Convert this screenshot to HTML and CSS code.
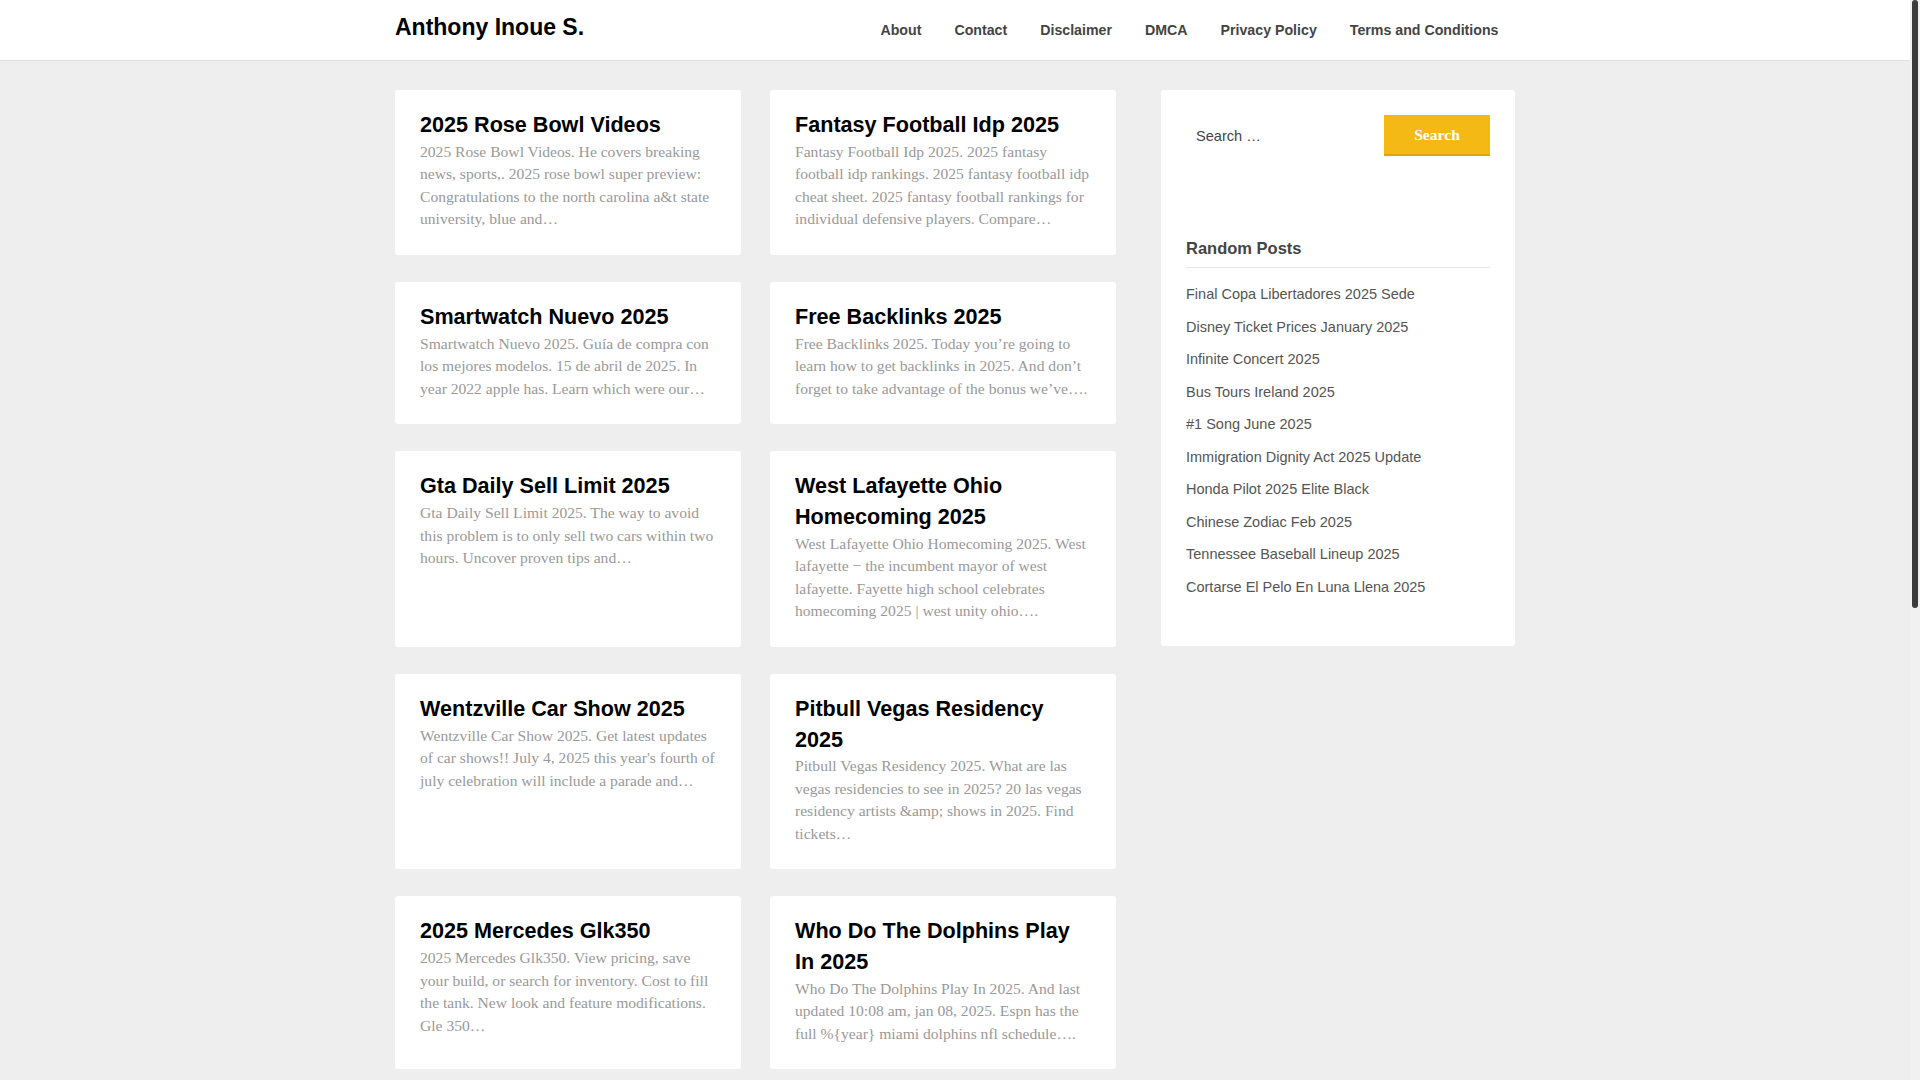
FILE: index.html
```html
<!DOCTYPE html>
<html lang="en">
<head>
<meta charset="utf-8">
<title>Anthony Inoue S.</title>
<link rel="stylesheet" href="styles.css">
</head>
<body>
<header class="site-header">
  <div class="container header-inner">
    <a class="site-title" href="#">Anthony Inoue S.</a>
    <nav class="main-nav">
      <a href="#">About</a>
      <a href="#">Contact</a>
      <a href="#">Disclaimer</a>
      <a href="#">DMCA</a>
      <a href="#">Privacy Policy</a>
      <a href="#">Terms and Conditions</a>
    </nav>
  </div>
</header>

<div class="container page">
  <main class="posts">
    <article class="card">
      <h2 class="card-title">2025 Rose Bowl Videos</h2>
      <p class="card-excerpt">2025 Rose Bowl Videos. He covers breaking news, sports,. 2025 rose bowl super preview: Congratulations to the north carolina a&amp;t state university, blue and…</p>
    </article>
    <article class="card">
      <h2 class="card-title">Fantasy Football Idp 2025</h2>
      <p class="card-excerpt">Fantasy Football Idp 2025. 2025 fantasy football idp rankings. 2025 fantasy football idp cheat sheet. 2025 fantasy football rankings for individual defensive players. Compare…</p>
    </article>
    <article class="card">
      <h2 class="card-title">Smartwatch Nuevo 2025</h2>
      <p class="card-excerpt">Smartwatch Nuevo 2025. Guía de compra con los mejores modelos. 15 de abril de 2025. In year 2022 apple has. Learn which were our…</p>
    </article>
    <article class="card">
      <h2 class="card-title">Free Backlinks 2025</h2>
      <p class="card-excerpt">Free Backlinks 2025. Today you’re going to learn how to get backlinks in 2025. And don’t forget to take advantage of the bonus we’ve….</p>
    </article>
    <article class="card">
      <h2 class="card-title">Gta Daily Sell Limit 2025</h2>
      <p class="card-excerpt">Gta Daily Sell Limit 2025. The way to avoid this problem is to only sell two cars within two hours. Uncover proven tips and…</p>
    </article>
    <article class="card">
      <h2 class="card-title">West Lafayette Ohio Homecoming 2025</h2>
      <p class="card-excerpt">West Lafayette Ohio Homecoming 2025. West lafayette − the incumbent mayor of west lafayette. Fayette high school celebrates homecoming 2025 | west unity ohio….</p>
    </article>
    <article class="card">
      <h2 class="card-title">Wentzville Car Show 2025</h2>
      <p class="card-excerpt">Wentzville Car Show 2025. Get latest updates of car shows!! July 4, 2025 this year's fourth of july celebration will include a parade and…</p>
    </article>
    <article class="card">
      <h2 class="card-title">Pitbull Vegas Residency 2025</h2>
      <p class="card-excerpt">Pitbull Vegas Residency 2025. What are las vegas residencies to see in 2025? 20 las vegas residency artists &amp;amp; shows in 2025. Find tickets…</p>
    </article>
    <article class="card">
      <h2 class="card-title">2025 Mercedes Glk350</h2>
      <p class="card-excerpt">2025 Mercedes Glk350. View pricing, save your build, or search for inventory. Cost to fill the tank. New look and feature modifications. Gle 350…</p>
    </article>
    <article class="card">
      <h2 class="card-title">Who Do The Dolphins Play In 2025</h2>
      <p class="card-excerpt">Who Do The Dolphins Play In 2025. And last updated 10:08 am, jan 08, 2025. Espn has the full %{year} miami dolphins nfl schedule….</p>
    </article>
    <article class="card">
      <h2 class="card-title">Nba Draft Lottery 2025 Date</h2>
      <p class="card-excerpt">Nba Draft Lottery 2025 Date. The lottery will determine the order of the first fourteen picks. Here is everything you need to know about…</p>
    </article>
    <article class="card">
      <h2 class="card-title">Calendar Of Events 2025</h2>
      <p class="card-excerpt">Calendar Of Events 2025. Find festivals, concerts and community events happening this year. Plan ahead and mark your…</p>
    </article>
    <article class="card">
      <h2 class="card-title">Best Family Cars 2025</h2>
      <p class="card-excerpt">Best Family Cars 2025. Our experts rank the best family cars for space, safety and value. Compare prices and…</p>
    </article>
    <article class="card">
      <h2 class="card-title">Spring Break Dates 2025</h2>
      <p class="card-excerpt">Spring Break Dates 2025. Check when spring break starts for colleges and school districts across the country. See the full…</p>
    </article>
  </main>

  <aside class="sidebar">
    <section class="widget widget-search">
      <form class="search-form" action="#">
        <input class="search-field" type="search" placeholder="Search …">
        <button class="search-submit" type="button">Search</button>
      </form>
    </section>
    <section class="widget widget-random">
      <h3 class="widget-title">Random Posts</h3>
      <ul class="widget-list">
        <li><a href="#">Final Copa Libertadores 2025 Sede</a></li>
        <li><a href="#">Disney Ticket Prices January 2025</a></li>
        <li><a href="#">Infinite Concert 2025</a></li>
        <li><a href="#">Bus Tours Ireland 2025</a></li>
        <li><a href="#">#1 Song June 2025</a></li>
        <li><a href="#">Immigration Dignity Act 2025 Update</a></li>
        <li><a href="#">Honda Pilot 2025 Elite Black</a></li>
        <li><a href="#">Chinese Zodiac Feb 2025</a></li>
        <li><a href="#">Tennessee Baseball Lineup 2025</a></li>
        <li><a href="#">Cortarse El Pelo En Luna Llena 2025</a></li>
      </ul>
    </section>
  </aside>
</div>

<footer class="site-footer">
  <div class="container footer-inner">Copyright © 2025 Anthony Inoue S.</div>
</footer>

<div class="scrollbar" aria-hidden="true"><div class="scrollbar-thumb"></div></div>
</body>
</html>
```

FILE: styles.css
```css
html {
  background: #eeeeee;
}

body {
  margin: 0;
  padding-right: 10px;
  background: #eeeeee;
  font-family: "Liberation Sans", Arial, sans-serif;
  color: #333333;
}

a {
  text-decoration: none;
  color: inherit;
}

.container {
  width: 1120px;
  margin: 0 auto;
}

/* Fake window scrollbar (overlay on the right edge) */
.scrollbar {
  position: fixed;
  top: 0;
  right: 0;
  width: 10px;
  height: 100vh;
  background: #f1f1f1;
}

.scrollbar-thumb {
  width: 6px;
  height: 608px;
  margin: 0 auto;
  border-radius: 3px;
  background: #3c3c3c;
}

/* Header */
.site-header {
  background: #ffffff;
  border-bottom: 1px solid #dddddd;
}

.header-inner {
  height: 60px;
  display: flex;
  align-items: center;
  justify-content: space-between;
}

.site-title {
  font-size: 23px;
  font-weight: 700;
  color: #000000;
  margin-bottom: 5px;
}

.main-nav {
  display: flex;
  align-items: center;
}

.main-nav a {
  font-size: 14.2px;
  font-weight: 700;
  color: #444444;
  padding: 0 16.5px;
  line-height: 60px;
}

/* Page layout */
.page {
  display: flex;
  align-items: flex-start;
  gap: 45px;
  padding-top: 29px;
  padding-bottom: 30px;
}

.posts {
  flex: 0 0 721px;
  min-width: 0;
  display: grid;
  grid-template-columns: 346px 346px;
  column-gap: 29px;
  row-gap: 27px;
}

.card {
  background: #ffffff;
  border-radius: 3px;
  padding: 20px 25px 24px;
}

.card-title {
  margin: 0;
  font-size: 21.6px;
  line-height: 30.6px;
  font-weight: 700;
  color: #000000;
}

.card-excerpt {
  margin: 0;
  font-family: "Liberation Serif", "Times New Roman", serif;
  font-size: 15.6px;
  line-height: 22.6px;
  color: #999999;
}

/* Sidebar */
.sidebar {
  flex: 0 0 354px;
  width: 354px;
  min-width: 0;
  background: #ffffff;
  border-radius: 3px;
  padding: 25px;
  box-sizing: border-box;
}

.widget-search {
  margin-bottom: 80px;
}

.search-form {
  display: flex;
  align-items: stretch;
  height: 41px;
}

.search-field {
  flex: 1 1 0;
  width: 0;
  min-width: 0;
  border: none;
  outline: none;
  background: #ffffff;
  padding: 0 10px;
  font-family: "Liberation Sans", Arial, sans-serif;
  font-size: 14.6px;
  color: #444444;
}

.search-field::placeholder {
  color: #444444;
  opacity: 1;
}

.search-submit {
  flex: 0 0 106px;
  width: 106px;
  border: none;
  border-bottom: 2px solid #dea70f;
  background: #f5b916;
  color: #ffffff;
  font-family: "Liberation Serif", "Times New Roman", serif;
  font-weight: 700;
  font-size: 15.6px;
  padding: 0;
  cursor: pointer;
}

.widget-random {
  margin-bottom: 18px;
}

.widget-title {
  margin: 0;
  font-size: 16.5px;
  line-height: 25px;
  font-weight: 700;
  color: #444444;
  padding-bottom: 6px;
  border-bottom: 1px solid #e5e5e5;
}

.widget-list {
  list-style: none;
  margin: 10px 0 0;
  padding: 0;
}

.widget-list li {
  font-size: 14.5px;
  line-height: 22.5px;
  padding: 5px 0;
  color: #555555;
}

/* Footer */
.site-footer {
  background: #ffffff;
  border-top: 1px solid #dddddd;
}

.footer-inner {
  padding: 24px 0;
  font-size: 14px;
  color: #666666;
  text-align: center;
}
```
